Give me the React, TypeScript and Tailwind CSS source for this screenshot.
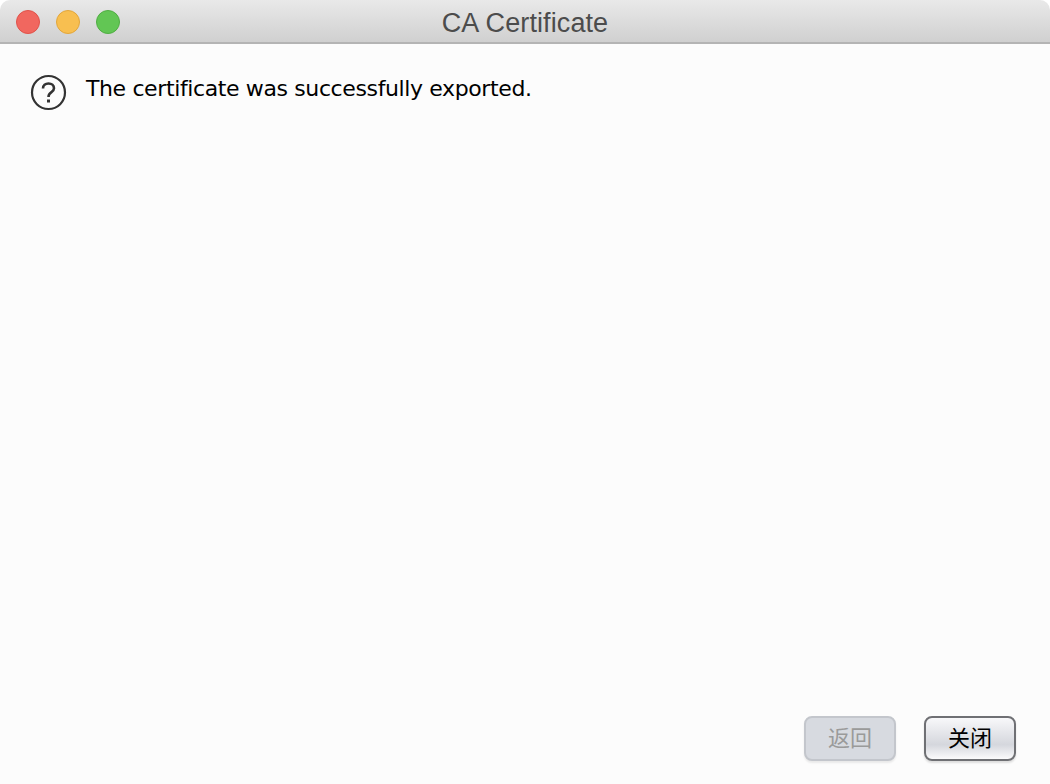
import React from 'react';

const lights = ['bg-[#f1675f] border-[#e0524a]', 'bg-[#f8bf50] border-[#e2a63b]', 'bg-[#62c654] border-[#50ad43]'];

const App: React.FC = () => {
  return (
    <div className="w-[1050px] h-[784px] overflow-hidden bg-white">
      <div className="flex flex-col w-full h-full rounded-t-[10px] overflow-hidden bg-[#fcfcfc]">
        {/* Title bar */}
        <div className="relative flex items-center justify-center h-11 shrink-0 bg-gradient-to-b from-[#e9e9e9] to-[#d0d0d0] border-b-2 border-[#b4b4b4]">
          <div className="absolute left-4 top-[10px] flex gap-4">
            {lights.map(c => (
              <div key={c} className={`w-6 h-6 rounded-full border ${c}`} />
            ))}
          </div>
          <span className="font-['Liberation_Sans',sans-serif] text-[27px] tracking-[0.1px] leading-none text-[#4c4c4c] mt-[5px]">CA Certificate</span>
        </div>

        {/* Message */}
        <div className="flex-1 flex items-start gap-[19px] pl-[30px] pt-[30px]">
          <svg width="37" height="37" viewBox="0 0 37 37" fill="none" className="shrink-0">
            <circle cx="18.5" cy="18.5" r="16.5" stroke="#333333" strokeWidth="2.2" />
            <path d="M13 14.5c0-3.2 2.4-5 5.5-5s5.5 1.8 5.5 4.7c0 2-1.2 3.1-2.8 4.2-1.8 1.2-2.7 2.2-2.7 4.6" stroke="#333333" strokeWidth="2.6" />
            <rect x="17" y="25.5" width="3" height="3" fill="#333333" />
          </svg>
          <span className="font-['DejaVu_Sans',sans-serif] text-[22px] tracking-[-0.38px] leading-[28px] text-black mt-[1px]">The certificate was successfully exported.</span>
        </div>

        {/* Buttons */}
        <div className="flex justify-end gap-7 pr-[34px] pb-[23px]">
          <button className="w-[92px] h-[45px] pb-[4px] rounded-lg border-2 border-[#c3c6cc] bg-[#d7dae0] shadow-[0_2px_2px_rgba(0,0,0,0.08)] font-['Noto_Sans_CJK_SC',sans-serif] text-[22px] text-[#9a9a9a]">返回</button>
          <button className="w-[92px] h-[45px] pb-[4px] rounded-lg border-2 border-[#6f7074] bg-gradient-to-b from-[#f8f8fa] via-[#d5d7dd] via-65% to-[#fbfbfc] shadow-[0_2px_2px_rgba(0,0,0,0.12)] font-['Noto_Sans_CJK_SC',sans-serif] text-[22px] text-black">关闭</button>
        </div>
      </div>
    </div>
  );
};

export default App;
